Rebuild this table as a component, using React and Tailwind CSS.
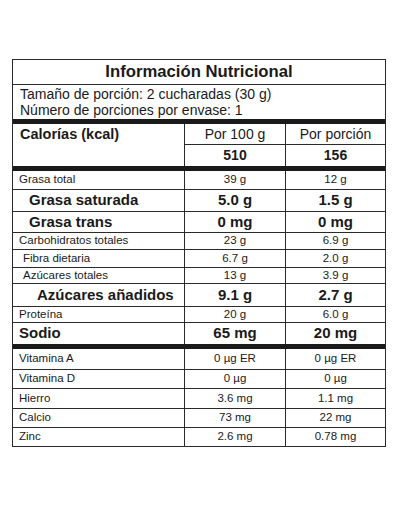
const ROWS = [
  { label: 'Grasa total', a: '39 g', b: '12 g', h: 'h-[19px]' },
  { label: 'Grasa saturada', a: '5.0 g', b: '1.5 g', h: 'h-[22px]', bold: true, indent: 'pl-[16px]' },
  { label: 'Grasa trans', a: '0 mg', b: '0 mg', h: 'h-[21px]', bold: true, indent: 'pl-[16px]' },
  { label: 'Carbohidratos totales', a: '23 g', b: '6.9 g', h: 'h-[17px]' },
  { label: 'Fibra dietaria', a: '6.7 g', b: '2.0 g', h: 'h-[18px]', indent: 'pl-[10px]' },
  { label: 'Azúcares totales', a: '13 g', b: '3.9 g', h: 'h-[16px]', indent: 'pl-[10px]' },
  { label: 'Azúcares añadidos', a: '9.1 g', b: '2.7 g', h: 'h-[23px]', bold: true, indent: 'pl-[24px]' },
  { label: 'Proteína', a: '20 g', b: '6.0 g', h: 'h-[16px]' },
  { label: 'Sodio', a: '65 mg', b: '20 mg', h: 'h-[21px]', bold: true, last: true },
]

const MINERALS = [
  { label: 'Vitamina A', a: '0 µg ER', b: '0 µg ER', h: 'h-[21px]' },
  { label: 'Vitamina D', a: '0 µg', b: '0 µg', h: 'h-[19px]' },
  { label: 'Hierro', a: '3.6 mg', b: '1.1 mg', h: 'h-[20px]' },
  { label: 'Calcio', a: '73 mg', b: '22 mg', h: 'h-[19px]' },
  { label: 'Zinc', a: '2.6 mg', b: '0.78 mg', h: 'h-[18px]', last: true },
]

function Row({ row }) {
  const text = row.bold ? 'text-[15px] font-bold' : 'text-[11.5px]'
  return (
    <div className={`flex ${row.h} ${row.last ? '' : 'border-b border-[#2a2a2a]'} ${text}`}>
      <div className={`w-[171px] flex items-center pl-[6px] ${row.indent || ''}`}>{row.label}</div>
      <div className="w-[101px] flex items-center justify-center border-l border-[#2a2a2a]">{row.a}</div>
      <div className="w-[100px] flex items-center justify-center border-l border-[#2a2a2a]">{row.b}</div>
    </div>
  )
}

export default function App() {
  return (
    <div className="w-[400px] h-[508px] bg-white pt-[59px] pl-[12px] text-[#1a1a1a] font-['Liberation_Sans',Arial,sans-serif]">
      <div className="w-[374px] border border-[#2a2a2a]">
        <div className="h-[25px] border-b border-[#2a2a2a] flex items-center justify-center text-[16.7px] font-bold">
          Información Nutricional
        </div>
        <div className="h-[34px] pl-[7px] pt-[1px] text-[14px] leading-[16px]">
          <div>Tamaño de porción: 2 cucharadas (30 g)</div>
          <div>Número de porciones por envase: 1</div>
        </div>
        <div className="h-[5px] bg-[#1a1a1a]" />
        <div className="flex">
          <div className="w-[171px] pl-[7px] pt-[1px] text-[14.5px] font-bold leading-[18px]">Calorías (kcal)</div>
          <div className="w-[101px] border-l border-[#2a2a2a]">
            <div className="h-[21px] border-b border-[#2a2a2a] flex items-center justify-center text-[14px]">Por 100 g</div>
            <div className="h-[21px] flex items-center justify-center text-[14px] font-bold">510</div>
          </div>
          <div className="w-[100px] border-l border-[#2a2a2a]">
            <div className="h-[21px] border-b border-[#2a2a2a] flex items-center justify-center text-[14px]">Por porción</div>
            <div className="h-[21px] flex items-center justify-center text-[14px] font-bold">156</div>
          </div>
        </div>
        <div className="h-[5px] bg-[#1a1a1a]" />
        {ROWS.map(row => (
          <Row key={row.label} row={row} />
        ))}
        <div className="h-[5px] bg-[#1a1a1a]" />
        {MINERALS.map(row => (
          <Row key={row.label} row={row} />
        ))}
      </div>
    </div>
  )
}
